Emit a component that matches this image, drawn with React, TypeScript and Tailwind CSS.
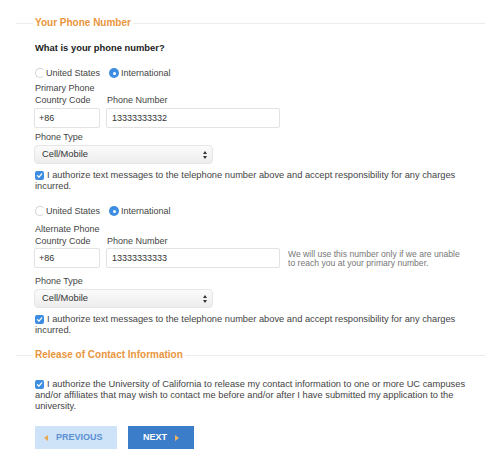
import React from "react";

function SectionHeading({ title }: { title: string }) {
  return (
    <div className="flex items-center h-[14px] pl-[16px] pr-[14px]">
      <div className="w-[17px] h-px bg-[#ececec]" />
      <span className="px-[2px] text-[10px] font-bold text-[#e8953c] leading-[14px]">
        {title}
      </span>
      <div className="flex-1 h-px bg-[#ececec]" />
    </div>
  );
}

function Radio({ checked }: { checked?: boolean }) {
  if (checked) {
    return (
      <span className="inline-flex items-center justify-center w-[10px] h-[10px] rounded-full bg-[#3d8ee0] mr-[2px]">
        <span className="w-[3px] h-[3px] rounded-full bg-white" />
      </span>
    );
  }
  return (
    <span className="inline-block w-[10px] h-[10px] rounded-full border border-[#d4d4d4] border-r-transparent mr-[1px]" />
  );
}

function Checkbox() {
  return (
    <span className="inline-flex items-center justify-center w-[9px] h-[9px] rounded-[2px] bg-[#3d8ee0] align-[-1px] mr-[3px]">
      <svg width="7" height="7" viewBox="0 0 10 10" fill="none">
        <path d="M2 5.2 L4.2 7.4 L8.2 2.6" stroke="white" strokeWidth="1.8" strokeLinecap="round" strokeLinejoin="round" />
      </svg>
    </span>
  );
}

function RadioRow() {
  return (
    <div className="flex items-center h-[12px] leading-[12px]">
      <Radio />
      <span>United States</span>
      <span className="w-[9px]" />
      <Radio checked />
      <span>International</span>
    </div>
  );
}

function PhoneInputs({ number }: { number: string }) {
  return (
    <div className="flex">
      <div className="w-[66px] h-[20px] border border-[#e3e3e3] rounded-[2px] pl-[4px] leading-[18px] text-[#333]">
        +86
      </div>
      <div className="ml-[6px] w-[174px] h-[20px] border border-[#e3e3e3] rounded-[2px] pl-[5px] leading-[18px] text-[#333]">
        {number}
      </div>
    </div>
  );
}

function SelectBox() {
  return (
    <div className="flex items-center justify-between w-[179px] h-[19px] rounded-[4px] border border-[#e6e6e6] bg-gradient-to-b from-[#fbfbfb] to-[#ededed] pl-[7px] pr-[5px] text-[9.3px] text-[#333]">
      <span>Cell/Mobile</span>
      <svg width="4" height="8" viewBox="0 0 4 8">
        <path d="M2 0 L4 3 L0 3 Z M2 8 L4 5 L0 5 Z" fill="#333" />
      </svg>
    </div>
  );
}

function Label({ children, className = "" }: { children: React.ReactNode; className?: string }) {
  return <div className={`h-[12px] leading-[12px] ${className}`}>{children}</div>;
}

function AuthorizeText() {
  return (
    <div className="leading-[11px] text-[9.3px]">
      <Checkbox />I authorize text messages to the telephone number above and accept responsibility for any charges
      <br />
      incurred.
    </div>
  );
}

export default function App() {
  return (
    <div className="w-[499px] h-[457px] bg-white overflow-hidden font-['Liberation_Sans',Arial,sans-serif] text-[9px] text-[#444]">
      <div className="pt-[16px]">
        <SectionHeading title="Your Phone Number" />
        <div className="pl-[35px]">
          <div className="mt-[12px] h-[12px] leading-[12px] text-[9.4px] font-bold text-[#222]">
            What is your phone number?
          </div>

          {/* primary */}
          <div className="mt-[13px]">
            <RadioRow />
          </div>
          <Label className="mt-[3px]">Primary Phone</Label>
          <div className="flex">
            <Label className="w-[72px]">Country Code</Label>
            <Label>Phone Number</Label>
          </div>
          <div className="mt-[2px] -ml-[1px]">
            <PhoneInputs number="13333333332" />
          </div>
          <Label className="mt-[3px]">Phone Type</Label>
          <div className="mt-[2px] -ml-[1px]">
            <SelectBox />
          </div>
          <div className="mt-[6px]">
            <AuthorizeText />
          </div>

          {/* alternate */}
          <div className="mt-[13px]">
            <RadioRow />
          </div>
          <Label className="mt-[6px]">Alternate Phone</Label>
          <div className="flex">
            <Label className="w-[72px]">Country Code</Label>
            <Label>Phone Number</Label>
          </div>
          <div className="mt-[1px] -ml-[1px] flex items-start">
            <PhoneInputs number="13333333333" />
            <div className="ml-[8px] mt-[2px] text-[8.6px] leading-[9px] text-[#777]">
              We will use this number only if we are unable
              <br />
              to reach you at your primary number.
            </div>
          </div>
          <Label className="mt-[7px]">Phone Type</Label>
          <div className="mt-[2px] -ml-[1px]">
            <SelectBox />
          </div>
          <div className="mt-[6px]">
            <AuthorizeText />
          </div>
        </div>

        <div className="mt-[12px]">
          <SectionHeading title="Release of Contact Information" />
        </div>
        <div className="pl-[35px]">
          <div className="mt-[17px] leading-[11px] text-[9.3px]">
            <Checkbox />I authorize the University of California to release my contact information to one or more UC campuses
            <br />
            and/or affiliates that may wish to contact me before and/or after I have submitted my application to the
            <br />
            university.
          </div>

          <div className="mt-[14px] flex">
            <button className="flex items-center w-[82px] h-[23px] bg-[#cfe3f8] pl-[9px] text-[9px] font-bold text-[#5b90d2]">
              <svg width="4" height="6" viewBox="0 0 4 6" className="mr-[8px]">
                <path d="M4 0 L0 3 L4 6 Z" fill="#e9a94f" />
              </svg>
              PREVIOUS
            </button>
            <button className="ml-[11px] flex items-center w-[66px] h-[23px] bg-[#3b7dc9] pl-[15px] text-[9px] font-bold text-white">
              NEXT
              <svg width="4" height="6" viewBox="0 0 4 6" className="ml-[8px]">
                <path d="M0 0 L4 3 L0 6 Z" fill="#f2b463" />
              </svg>
            </button>
          </div>
        </div>
      </div>
    </div>
  );
}
